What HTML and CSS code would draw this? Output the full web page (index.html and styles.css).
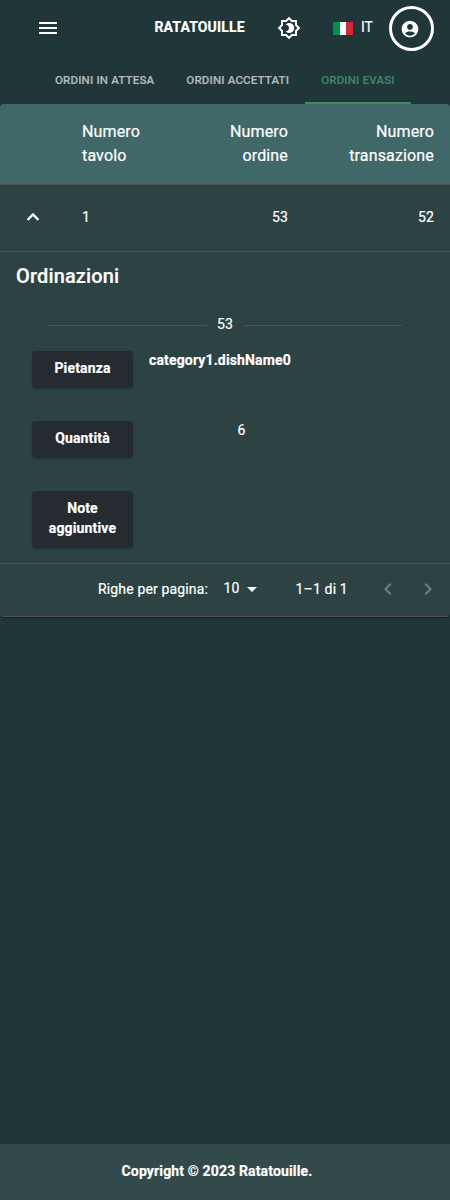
FILE: index.html
```html
<!DOCTYPE html>
<html lang="it">
<head>
<meta charset="utf-8">
<title>Ratatouille</title>
<link rel="stylesheet" href="styles.css">
</head>
<body>
<header class="topbar">
  <svg class="icon menu" viewBox="0 0 24 24"><path d="M3 18h18v-2H3v2zm0-5h18v-2H3v2zm0-7v2h18V6H3z"/></svg>
  <strong class="brand">RATATOUILLE</strong>
  <svg class="icon theme" viewBox="0 0 24 24"><path d="M20 15.310 23.310 12 20 8.690V4h-4.690L12 .69 8.690 4H4v4.690L.69 12 4 15.310V20h4.690L12 23.310 15.310 20H20v-4.690zm-2-.83V18h-3.520L12 20.480 9.520 18H6v-3.520L3.520 12 6 9.520V6h3.520L12 3.520 14.480 6H18v3.520L20.480 12 18 14.480z"/><path d="M12.290 17c-1.380 0-2.660-.560-3.600-1.500 2-.3 3.310-1.700 3.310-3.500s-1.310-3.200-3.310-3.500c.94-.940 2.220-1.500 3.600-1.500 2.760 0 5 2.240 5 5s-2.240 5-5 5z"/></svg>
  <span class="flag"><i></i><i></i><i></i></span>
  <span class="lang">IT</span>
  <span class="account"><svg class="icon" viewBox="0 0 24 24"><path d="M12 2C6.480 2 2 6.480 2 12s4.480 10 10 10 10-4.480 10-10S17.520 2 12 2zm0 4c1.930 0 3.500 1.570 3.500 3.500S13.930 13 12 13s-3.500-1.570-3.500-3.500S10.070 6 12 6zm0 14c-2.030 0-4.430-.82-6.140-2.880C7.550 15.800 9.680 15 12 15s4.450.8 6.140 2.120C16.430 19.180 14.030 20 12 20z"/></svg></span>
</header>
<nav class="tabs">
  <span class="tab">ORDINI IN ATTESA</span>
  <span class="tab">ORDINI ACCETTATI</span>
  <span class="tab active">ORDINI EVASI</span>
</nav>
<main class="paper">
  <div class="row head">
    <span></span><span>Numero<br>tavolo</span><span class="num">Numero<br>ordine</span><span class="num">Numero<br>transazione</span>
  </div>
  <div class="row order">
    <svg class="icon chevron" viewBox="0 0 24 24"><path d="M7.410 15.410 12 10.830l4.590 4.580L18 14l-6-6-6 6z"/></svg>
    <span>1</span><span class="num">53</span><span class="num">52</span>
  </div>
  <section class="detail">
    <h2 class="title">Ordinazioni</h2>
    <div class="divider">53</div>
    <div class="item"><span class="label">Pietanza</span><strong class="value">category1.dishName0</strong></div>
    <div class="item"><span class="label">Quantità</span><span class="value quantity">6</span></div>
    <div class="item"><span class="label">Note<br>aggiuntive</span></div>
  </section>
  <div class="pagination">
    <span>Righe per pagina:</span>
    <span class="select">10<svg class="icon" viewBox="0 0 24 24"><path d="m7 10 5 5 5-5z"/></svg></span>
    <span class="range">1–1 di 1</span>
    <svg class="icon page-arrow" viewBox="0 0 24 24"><path d="M15.410 16.590 10.830 12l4.580-4.590L14 6l-6 6 6 6z"/></svg>
    <svg class="icon page-arrow" viewBox="0 0 24 24"><path d="M8.590 16.590 13.170 12 8.590 7.410 10 6l6 6-6 6z"/></svg>
  </div>
</main>
<footer class="footer">Copyright © 2023 Ratatouille.</footer>
</body>
</html>
```
FILE: styles.css
```css
* { box-sizing: border-box; }
body {
  margin: 0;
  min-height: 1200px;
  display: flex;
  flex-direction: column;
  background: #203638;
  color: #fff;
  font: 400 14px/20px Roboto, sans-serif;
  letter-spacing: 0.15px;
  -webkit-text-stroke: 0.2px currentColor;
}
.icon { width: 24px; height: 24px; fill: currentColor; flex: none; display: block; }
.topbar { height: 56px; display: flex; align-items: center; padding: 0 16px 0 36px; }
.brand { width: 91px; margin-left: 94.500px; letter-spacing: .15px; font-weight: 700; white-space: nowrap; padding-bottom: 2px; }
.theme { margin-left: 31.500px; }
.flag { display: flex; width: 20px; height: 13px; margin-left: 32px; }
.flag i { flex: 1; background: #fff; }
.flag i:first-child { background: #009246; }
.flag i:last-child { background: #ce2b37; }
.lang { width: 12px; margin-left: 8px; letter-spacing: 0; padding-bottom: 2px; }
.account {
  width: 45px; height: 45px; margin-left: auto;
  border: 3px solid #fff; border-radius: 50%;
  display: grid; place-items: center; padding: 2px 3px 0 0;
}
.account .icon { width: 20px; height: 20px; }
.tabs { height: 48px; display: flex; padding-left: 39px; }
.tab {
  padding: 0 16px; line-height: 49px; font-size: 11.500px; font-weight: 500;
  letter-spacing: .17px; color: #b1b9b9; white-space: nowrap;
}
.tab.active { color: #3f8564; border-bottom: 2px solid #3f8b66; }
.paper {
  background: #2c4243; border-radius: 4px; overflow: hidden;
  box-shadow: 0 2px 1px -1px rgba(0,0,0,.2), 0 1px 1px rgba(0,0,0,.14), 0 1px 3px rgba(0,0,0,.12);
}
.row {
  display: grid; grid-template-columns: 66px 92px 146px 146px; align-items: center;
  border-bottom: 1px solid #515151;
}
.row > span { padding: 0 16px; }
.row > .num { text-align: right; }
.head { height: 81px; background: #416868; font-size: 16px; line-height: 24px; }
.order { height: 67px; padding-bottom: 2px; }
.chevron { margin-left: 21px; stroke: currentColor; stroke-width: .5px; }
.detail { height: 312px; padding: 8px 16px 0; border-bottom: 1px solid #515151; }
.title { margin: 0; font-size: 20px; line-height: 32px; font-weight: 500; }
.divider { display: flex; align-items: center; gap: 10px; margin: 22px 32px 17px; }
.divider::before, .divider::after { content: ""; flex: 1; height: 1px; margin-top: 2px; background: #40575b; }
.item { display: flex; align-items: flex-start; gap: 16px; padding: 0 16px; margin-bottom: 33px; }
.label {
  width: 101px; padding: 7px 0 10px; border-radius: 4px; background: #262b32;
  font-weight: 700; text-align: center; box-shadow: 0 1px 2px rgba(0,0,0,.2);
}
.value { line-height: 18px; }
.quantity { width: 185px; text-align: center; }
.pagination { height: 53px; display: flex; align-items: center; padding: 0 0 2px 98px; border-bottom: 1px solid #515151; }
.select { display: flex; align-items: flex-start; margin-left: 15.500px; height: 24px; line-height: 22px; }
.range { margin-left: 32px; }
.page-arrow { color: #6f7f80; margin-left: 28px; }
.page-arrow + .page-arrow { margin-left: 16px; }
.footer {
  height: 56px; margin-top: auto; background: #334a4a; line-height: 55px;
  text-align: center; font-weight: 700; padding-right: 16px;
}
```
